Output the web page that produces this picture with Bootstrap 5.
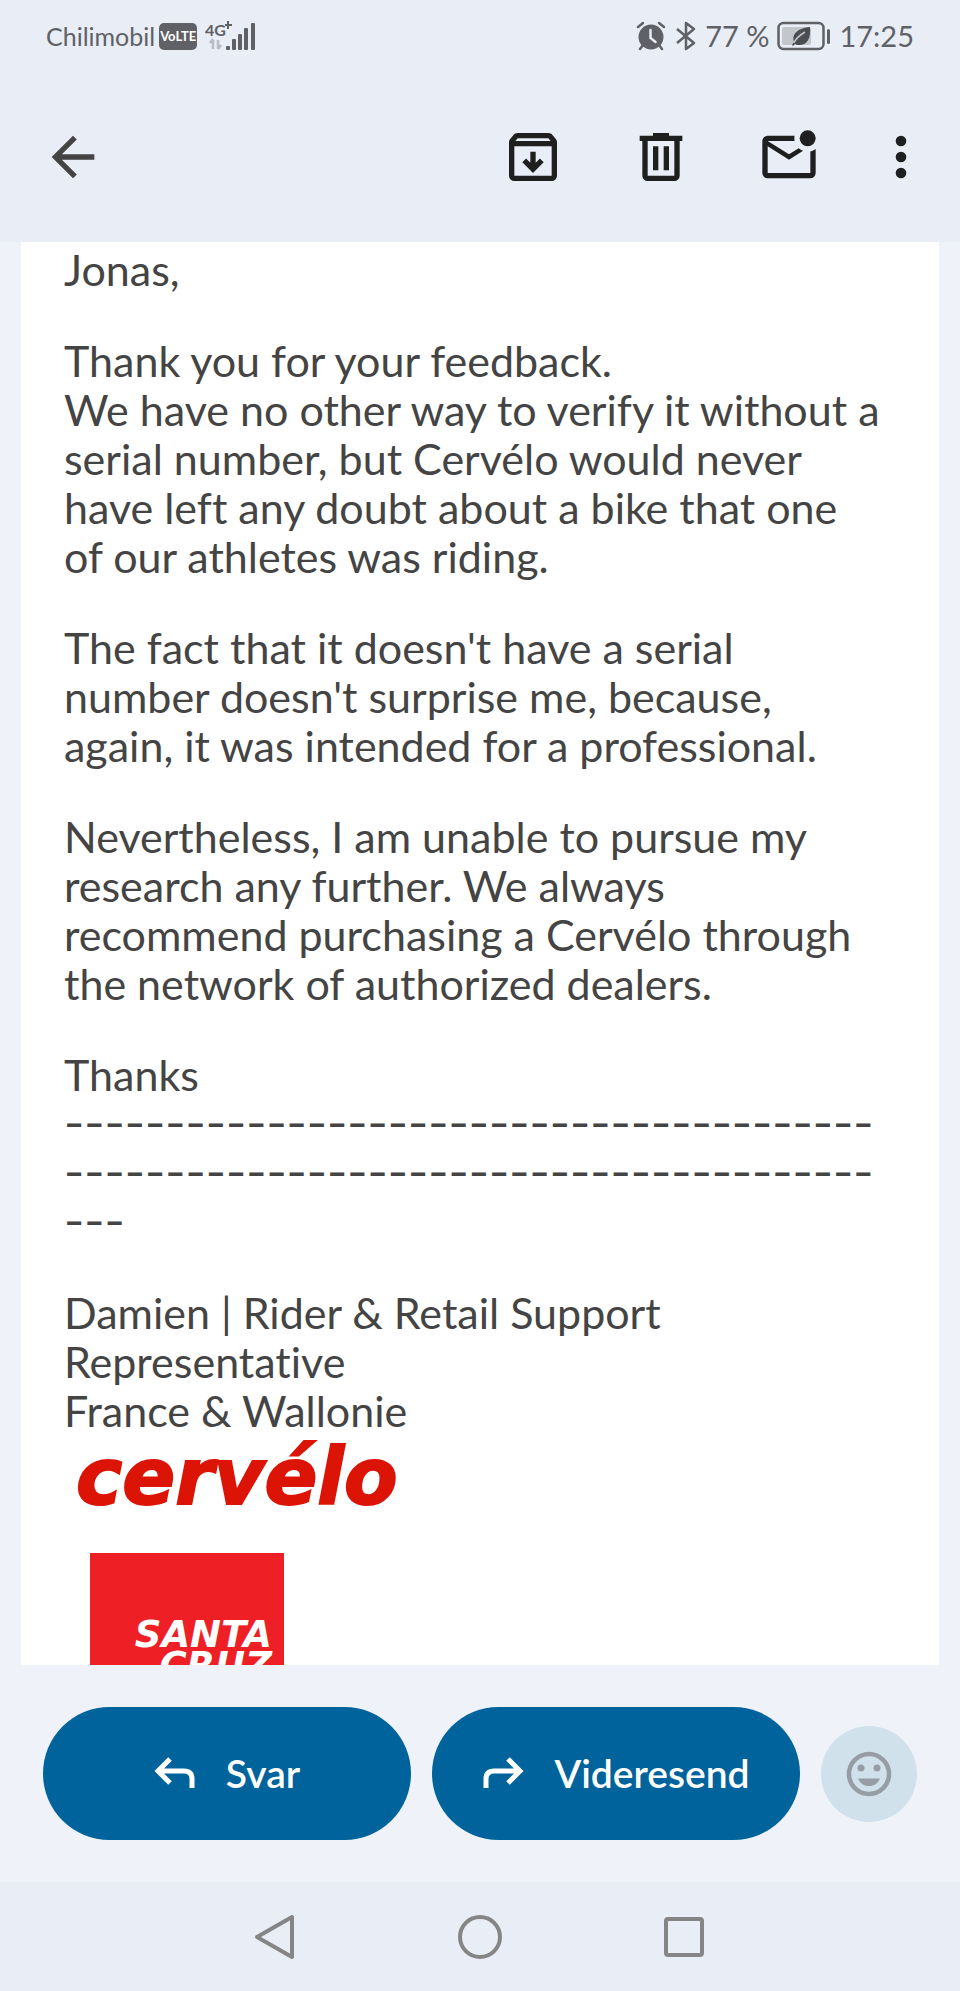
<!DOCTYPE html>
<html lang="no">
<head>
<meta charset="utf-8">
<meta name="viewport" content="width=device-width, initial-scale=1">
<title>Cervélo e-mail</title>
<link href="https://cdn.jsdelivr.net/npm/bootstrap@5.3.0/dist/css/bootstrap.min.css" rel="stylesheet">
<style>
  body { font-family: Lato, "Noto Sans", sans-serif; font-variant-ligatures: none; background: #eff3f9; color: #444; }
  .top-area, .nav-keys { background: #e8edf6; }
  .status-row { height: 72px; padding: 0 46px; color: #5f6167; font-size: 29px; line-height: 34px; }
  .carrier { font-size: 25px; }
  .volte { background: #5f6167; color: #fff; font-size: 13px; line-height: 27px; width: 38px; border-radius: 5px; }
  .app-bar { height: 170px; padding: 0 27px 0 41px; }
  .icon-btn { width: 64px; height: 64px; border: 0; color: #1f1f1f; }
  .icon-btn svg { width: 64px; height: 64px; display: block; }
  .bar-actions { gap: 64px; }
  .more-btn { margin-left: -16px; }
  .mail { margin: 0 21px; padding: 3px 43px 0; background: #fff; font-size: 43px; line-height: 49px; }
  .mail p { margin-bottom: 42px; }
  .mail .rule { font-family: Inter, sans-serif; font-size: 44px; }
  .brand-cervelo { font: italic bold 78px/84px "DejaVu Sans", sans-serif; color: #dc1405; padding-left: 12px; -webkit-text-stroke: 2px #dc1405; }
  .brand-sc { width: 194px; height: 194px; margin: 34px 0 0 26px; padding: 66px 12px 0 0; background: #ee2025; color: #fff;
    font: italic bold 37px/31px "DejaVu Sans", sans-serif; }
  .actions { padding: 42px 43px; gap: 21px; }
  .btn-pill { height: 133px; border-radius: 67px; background: #00639b; color: #fff; font-size: 39px; font-weight: 600; gap: 30px; border: 0; flex: 1 1 0; }
  .btn-pill:hover { background: #00578a; color: #fff; }
  .btn-emoji { width: 96px; height: 96px; background: #d1e1ec; color: #969da5; border: 0; }
  .nav-keys { height: 109px; gap: 140px; }
  .key-btn { width: 64px; height: 64px; border: 0; }
</style>
</head>
<body>
<div class="d-flex flex-column vh-100 overflow-hidden">
  <header class="top-area flex-shrink-0">
    <div class="status-row d-flex justify-content-between align-items-center">
      <div class="d-flex align-items-center">
        <span class="carrier">Chilimobil</span>
        <span class="volte fw-bold text-center ms-1">VoLTE</span>
        <svg class="ms-2" width="52" height="30" viewBox="0 0 52 30" fill="#5f6167" aria-hidden="true">
          <text x="0" y="15" font-size="16" font-weight="700" font-family="Liberation Sans Narrow, Lato">4G</text>
          <path d="M20 3h2V0h2v3h3v2h-3v3h-2V5h-2z"/>
          <path d="M8 19v9M8 18l-3 4M13 19v9M13 28l3-4" stroke="#b9bdc6" stroke-width="2.500" fill="none"/>
          <rect x="21" y="25" width="4" height="4" rx="1"/><rect x="27" y="18" width="4" height="11" rx="1"/>
          <rect x="33" y="13" width="4" height="16" rx="1"/><rect x="39" y="7" width="4" height="22" rx="1"/><rect x="46" y="2" width="4" height="27" rx="1"/>
        </svg>
      </div>
      <div class="d-flex align-items-center">
        <svg width="32" height="32" viewBox="0 0 32 32" aria-hidden="true">
          <path d="M3 7l5-4M29 7l-5-4M8 25l-3 4M24 25l3 4" stroke="#5f6167" stroke-width="2.500" stroke-linecap="round"/>
          <circle cx="16" cy="17" r="12.500" fill="#5f6167"/>
          <path d="M15.500 10v8l5 4" fill="none" stroke="#e8edf6" stroke-width="2.500" stroke-linecap="round"/>
        </svg>
        <svg class="ms-2" width="22" height="32" viewBox="0 0 22 32" fill="none" stroke="#5f6167" stroke-width="2.500" stroke-linejoin="round" aria-hidden="true"><path d="M2 9l17 14-8 6V3l8 6L2 23"/></svg>
        <span class="ms-2">77 %</span>
        <svg class="mx-2" width="54" height="30" viewBox="0 0 54 30" aria-hidden="true">
          <rect x="1.500" y="2" width="45" height="26" rx="5" fill="none" stroke="#5f6167" stroke-width="2.500"/>
          <rect x="5" y="6" width="29" height="18" rx="2" fill="#c3c6cd"/>
          <path d="M33 6c1 12-3 18-11 18-2 0-3-.5-4-1l-2 2-1-1 2-3c-3-8 4-14 16-15z" fill="#4b4d52"/>
          <path d="M17 22c2-5 6-8 11-11" stroke="#c3c6cd" stroke-width="1.500" fill="none"/>
          <rect x="50" y="8" width="3" height="15" rx="1.500" fill="#5f6167"/>
        </svg>
        <span>17:25</span>
      </div>
    </div>
    <nav class="app-bar d-flex justify-content-between align-items-center">
      <button type="button" class="icon-btn bg-transparent p-0" aria-label="Tilbake"><svg viewBox="0 0 24 24" fill="#444"><path d="M7.825 13l5.600 5.600L12 20l-8-8 8-8 1.425 1.400L7.825 11H20v2z"/></svg></button>
      <div class="d-flex bar-actions">
        <button type="button" class="icon-btn bg-transparent p-0" aria-label="Arkiver"><svg viewBox="0 0 24 24" fill="currentColor"><path fill-rule="evenodd" d="M5 21q-.825 0-1.412-.588Q3 19.825 3 19V6.525q0-.35.112-.675t.338-.6L4.700 3.725q.275-.35.687-.537T6.250 3h11.500q.45 0 .863.188t.687.537l1.250 1.525q.225.275.338.6t.112.675V19q0 .825-.588 1.412Q19.825 21 19 21Zm.4-15h13.200l-.85-1H6.250ZM5 8v11h14V8Zm7 10 4-4-1.400-1.400-1.600 1.600V10h-2v4.200l-1.600-1.600L8 14Z"/></svg></button>
        <button type="button" class="icon-btn bg-transparent p-0" aria-label="Slett"><svg viewBox="0 0 24 24" fill="currentColor"><path fill-rule="evenodd" d="M7 21q-.825 0-1.412-.588Q5 19.825 5 19V6H4V4h5V3h6v1h5v2h-1v13q0 .825-.588 1.412Q17.825 21 17 21ZM17 6H7v13h10ZM9 17h2V8H9Zm4 0h2V8h-2Z"/></svg></button>
        <button type="button" class="icon-btn bg-transparent p-0" aria-label="Merk som ulest"><svg viewBox="0 0 24 24" fill="currentColor"><path d="M4 20q-.825 0-1.412-.588Q2 18.825 2 18V6q0-.825.588-1.412Q3.175 4 4 4h10.100q-.1.500-.1 1t.1 1H4l8 5 3.650-2.275q.35.325.763.563T17.300 9.700L12 13 4 8v10h16V9.900q.575-.125 1.075-.35T22 9v9q0 .825-.588 1.412Q20.825 20 20 20Z"/><circle cx="19" cy="5" r="3"/></svg></button>
        <button type="button" class="icon-btn more-btn bg-transparent p-0" aria-label="Mer"><svg viewBox="0 0 24 24" fill="currentColor"><circle cx="12" cy="6" r="2"/><circle cx="12" cy="12" r="2"/><circle cx="12" cy="18" r="2"/></svg></button>
      </div>
    </nav>
  </header>

  <main class="mail flex-fill overflow-hidden">
    <p>Jonas,</p>
    <p>Thank you for your feedback.<br>We have no other way to verify it without a<br>serial number, but Cervélo would never<br>have left any doubt about a bike that one<br>of our athletes was riding.</p>
    <p>The fact that it doesn't have a serial<br>number doesn't surprise me, because,<br>again, it was intended for a professional.</p>
    <p>Nevertheless, I am unable to pursue my<br>research any further. We always<br>recommend purchasing a Cervélo through<br>the network of authorized dealers.</p>
    <div>Thanks</div>
    <p class="rule">----------------------------------------<br>----------------------------------------<br>---</p>
    <div>Damien | Rider &amp; Retail Support<br>Representative<br>France &amp; Wallonie</div>
    <div class="brand-cervelo">cervélo</div>
    <div class="brand-sc text-end">SANTA<br>CRUZ</div>
  </main>

  <div class="actions d-flex align-items-center flex-shrink-0">
    <button type="button" class="btn btn-pill d-flex align-items-center justify-content-center">
      <svg width="42" height="34" viewBox="0 0 42 34" fill="none" stroke="currentColor" stroke-width="5" aria-hidden="true"><path d="M16 2L4 14l12 12M4 14h26q8 0 8 8v9"/></svg>Svar</button>
    <button type="button" class="btn btn-pill d-flex align-items-center justify-content-center">
      <svg width="42" height="34" viewBox="0 0 42 34" fill="none" stroke="currentColor" stroke-width="5" aria-hidden="true"><path d="M26 2l12 12-12 12M38 14H12q-8 0-8 8v9"/></svg>Videresend</button>
    <button type="button" class="btn btn-emoji rounded-circle p-0 d-flex align-items-center justify-content-center" aria-label="Legg til reaksjon">
      <svg width="46" height="46" viewBox="0 0 46 46" fill="currentColor"><circle cx="23" cy="23" r="20" fill="none" stroke="currentColor" stroke-width="4.500"/><circle cx="15" cy="17" r="3.500"/><circle cx="31" cy="17" r="3.500"/><path d="M12 27.500h22c-2 5-6 7.500-11 7.500s-9-2.500-11-7.500z"/></svg>
    </button>
  </div>

  <nav class="nav-keys d-flex align-items-center justify-content-center flex-shrink-0">
    <button type="button" class="key-btn bg-transparent p-0" aria-label="Tilbake"><svg class="d-block" width="64" height="64" viewBox="0 0 64 64" fill="none" stroke="#858585" stroke-width="4" stroke-linejoin="round"><path d="M48 12v40L13 32z"/></svg></button>
    <button type="button" class="key-btn bg-transparent p-0" aria-label="Hjem"><svg class="d-block" width="64" height="64" viewBox="0 0 64 64" fill="none" stroke="#858585" stroke-width="4"><circle cx="32" cy="32" r="20"/></svg></button>
    <button type="button" class="key-btn bg-transparent p-0" aria-label="Oversikt"><svg class="d-block" width="64" height="64" viewBox="0 0 64 64" fill="none" stroke="#858585" stroke-width="4"><rect x="14" y="14" width="36" height="36" rx="2"/></svg></button>
  </nav>
</div>
<script src="https://cdn.jsdelivr.net/npm/bootstrap@5.3.0/dist/js/bootstrap.bundle.min.js"></script>
</body>
</html>
